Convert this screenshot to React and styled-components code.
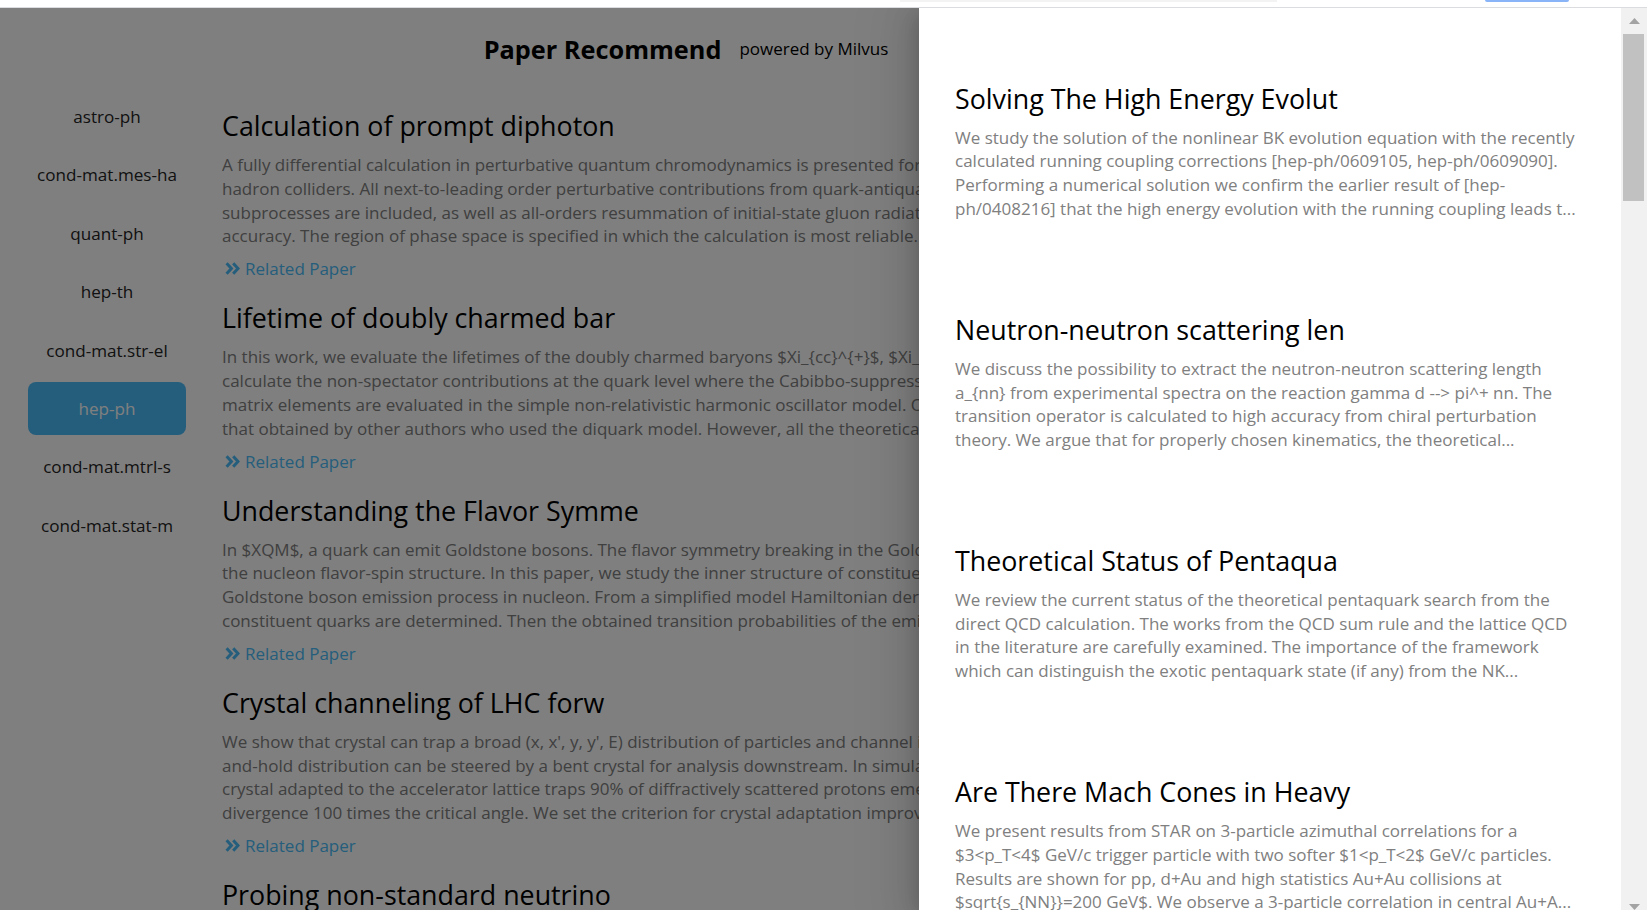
import React from 'react';
import styled, { createGlobalStyle } from 'styled-components';

const GlobalStyle = createGlobalStyle`
  html, body { margin: 0; padding: 0; height: 100%; overflow: hidden; background: #fff; }
  body { font-family: "Open Sans", "Noto Sans", sans-serif; }
  #root { height: 100%; }
  * { box-sizing: border-box; }
`;

const Shell = styled.div`
  display: flex;
  flex-direction: column;
  height: 100vh;
  overflow: hidden;
`;

const BrowserStrip = styled.div`
  flex: none;
  height: 8px;
  border-bottom: 1px solid #dadce0;
  background: #fff;
  display: flex;
  align-items: flex-start;
`;

const StripField = styled.div`
  margin-left: 900px;
  width: 377px;
  height: 2px;
  background: #f3f3f3;
`;

const StripPill = styled.div`
  margin-left: 208px;
  width: 84px;
  height: 2px;
  border-radius: 0 0 3px 3px;
  background: #8ab4f8;
`;

const Stage = styled.div`
  position: relative;
  flex: none;
  height: 902px;
  overflow: hidden;
`;

const Page = styled.div`
  width: 1372px;
`;

const Header = styled.header`
  height: 81px;
  display: flex;
  align-items: center;
  justify-content: center;
  gap: 18px;
`;

const Brand = styled.h1`
  margin: 0;
  font-size: 25.3px;
  font-weight: 700;
  color: #000;
`;

const Powered = styled.span`
  font-size: 17px;
  color: #000;
`;

const Body = styled.div`
  display: flex;
  align-items: flex-start;
`;

const Nav = styled.nav`
  flex: none;
  width: 214px;
  padding: 1px 28px 0;
  display: flex;
  flex-direction: column;
  gap: 5.4px;
`;

const NavItem = styled.div`
  height: 53px;
  display: flex;
  align-items: center;
  justify-content: center;
  border-radius: 8px;
  font-size: 17.1px;
  white-space: nowrap;
  color: ${(p) => (p.$active ? '#fff' : '#242424')};
  background: ${(p) => (p.$active ? '#4abcf8' : 'transparent')};
`;

const Feed = styled.main`
  flex: 1;
  min-width: 0;
  padding: 17px 0 0 8px;
`;

const Article = styled.article`
  padding-bottom: 14.4px;
`;

const Title = styled.h2`
  margin: 0;
  width: fit-content;
  font-size: 26.8px;
  line-height: 40px;
  font-weight: 400;
  color: #000;
  white-space: pre;
`;

const Abstract = styled.p`
  margin: 7px 0 0;
  width: 697px;
  font-size: 17px;
  line-height: 23.8px;
  color: #808080;
  white-space: pre;
  overflow: hidden;
`;

const Related = styled.a`
  display: flex;
  width: fit-content;
  align-items: center;
  gap: 5px;
  margin: 5.7px 0 0 3px;
  height: 30px;
  font-size: 17px;
  color: #4abcf8;
  text-decoration: none;
`;

const Mask = styled.div`
  position: absolute;
  inset: 0;
  background: rgba(0, 0, 0, 0.5);
`;

const Drawer = styled.aside`
  position: absolute;
  top: 0;
  right: 0;
  bottom: -10px;
  width: 728px;
  background: #fff;
  display: flex;
  box-shadow: -6px 0 16px -8px rgba(0, 0, 0, 0.16), -9px 0 28px 0 rgba(0, 0, 0, 0.1),
    -12px 0 48px 16px rgba(0, 0, 0, 0.06);
`;

const DrawerBody = styled.div`
  flex: 1;
  overflow: hidden;
  padding: 70.7px 6px 0 36px;
`;

const Rec = styled.section`
  height: 231.1px;
`;

const RecAbstract = styled.p`
  margin: 7px 0 0;
  font-size: 17px;
  line-height: 23.8px;
  color: #808080;
  white-space: pre;
`;

const ScrollRail = styled.div`
  flex: none;
  width: 26px;
  background: #f1f1f1;
  display: flex;
  flex-direction: column;
`;

const ScrollArrow = styled.div`
  flex: none;
  height: 26px;
  display: flex;
  align-items: center;
  justify-content: center;
`;

const Track = styled.div`
  flex: 1;
`;

const Thumb = styled.div`
  height: 167px;
  margin: 0 3px 0 2px;
  background: #c1c1c1;
`;

const navItems = [
  'astro-ph',
  'cond-mat.mes-ha',
  'quant-ph',
  'hep-th',
  'cond-mat.str-el',
  'hep-ph',
  'cond-mat.mtrl-s',
  'cond-mat.stat-m',
];

const papers = [
  {
    title: 'Calculation of prompt diphoton',
    abstract:
      'A fully differential calculation in perturbative quantum chromodynamics is presented for\nhadron colliders. All next-to-leading order perturbative contributions from quark-antiquark,\nsubprocesses are included, as well as all-orders resummation of initial-state gluon radiation\naccuracy. The region of phase space is specified in which the calculation is most reliable.',
  },
  {
    title: 'Lifetime of doubly charmed bar',
    abstract:
      'In this work, we evaluate the lifetimes of the doubly charmed baryons $Xi_{cc}^{+}$, $Xi_{cc}\ncalculate the non-spectator contributions at the quark level where the Cabibbo-suppressed\nmatrix elements are evaluated in the simple non-relativistic harmonic oscillator model. Our\nthat obtained by other authors who used the diquark model. However, all the theoretical',
  },
  {
    title: 'Understanding the Flavor Symme',
    abstract:
      'In $XQM$, a quark can emit Goldstone bosons. The flavor symmetry breaking in the Goldstone\nthe nucleon flavor-spin structure. In this paper, we study the inner structure of constituent\nGoldstone boson emission process in nucleon. From a simplified model Hamiltonian derived\nconstituent quarks are determined. Then the obtained transition probabilities of the emission',
  },
  {
    title: 'Crystal channeling of LHC forw',
    abstract:
      "We show that crystal can trap a broad (x, x', y, y', E) distribution of particles and channel it\nand-hold distribution can be steered by a bent crystal for analysis downstream. In simulations\ncrystal adapted to the accelerator lattice traps 90% of diffractively scattered protons emerging\ndivergence 100 times the critical angle. We set the criterion for crystal adaptation improving",
  },
  {
    title: 'Probing non-standard neutrino ',
  },
];

const recommendations = [
  {
    title: 'Solving The High Energy Evolut',
    abstract:
      'We study the solution of the nonlinear BK evolution equation with the recently\ncalculated running coupling corrections [hep-ph/0609105, hep-ph/0609090].\nPerforming a numerical solution we confirm the earlier result of [hep-\nph/0408216] that the high energy evolution with the running coupling leads t...',
  },
  {
    title: 'Neutron-neutron scattering len',
    abstract:
      'We discuss the possibility to extract the neutron-neutron scattering length\na_{nn} from experimental spectra on the reaction gamma d --> pi^+ nn. The\ntransition operator is calculated to high accuracy from chiral perturbation\ntheory. We argue that for properly chosen kinematics, the theoretical...',
  },
  {
    title: 'Theoretical Status of Pentaqua',
    abstract:
      'We review the current status of the theoretical pentaquark search from the\ndirect QCD calculation. The works from the QCD sum rule and the lattice QCD\nin the literature are carefully examined. The importance of the framework\nwhich can distinguish the exotic pentaquark state (if any) from the NK...',
  },
  {
    title: 'Are There Mach Cones in Heavy ',
    abstract:
      'We present results from STAR on 3-particle azimuthal correlations for a\n$3<p_T<4$ GeV/c trigger particle with two softer $1<p_T<2$ GeV/c particles.\nResults are shown for pp, d+Au and high statistics Au+Au collisions at\n$sqrt{s_{NN}}=200 GeV$. We observe a 3-particle correlation in central Au+A...',
  },
];

const DoubleChevron = () => (
  <svg width="15" height="13" viewBox="0 0 15 13" aria-hidden="true">
    <path
      d="M1.6 1.2 L6.4 6.5 L1.6 11.8 M8.2 1.2 L13 6.5 L8.2 11.8"
      fill="none"
      stroke="currentColor"
      strokeWidth="3"
      strokeLinejoin="miter"
    />
  </svg>
);

const Arrow = ({ down }) => (
  <svg width="11" height="6" viewBox="0 0 11 6" aria-hidden="true">
    <path d={down ? 'M0 0 H11 L5.5 6 Z' : 'M0 6 H11 L5.5 0 Z'} fill="#a3a3a3" />
  </svg>
);

export default function App() {
  return (
    <>
      <GlobalStyle />
      <Shell>
        <BrowserStrip>
          <StripField />
          <StripPill />
        </BrowserStrip>
        <Stage>
          <Page>
            <Header>
              <Brand>Paper Recommend</Brand>
              <Powered>powered by Milvus</Powered>
            </Header>
            <Body>
              <Nav>
                {navItems.map((n) => (
                  <NavItem key={n} $active={n === 'hep-ph'}>
                    {n}
                  </NavItem>
                ))}
              </Nav>
              <Feed>
                {papers.map((p) => (
                  <Article key={p.title}>
                    <Title>{p.title}</Title>
                    {p.abstract && (
                      <>
                        <Abstract>{p.abstract}</Abstract>
                        <Related href="#">
                          <DoubleChevron />
                          Related Paper
                        </Related>
                      </>
                    )}
                  </Article>
                ))}
              </Feed>
            </Body>
          </Page>
          <Mask />
          <Drawer>
            <DrawerBody>
              {recommendations.map((r) => (
                <Rec key={r.title}>
                  <Title>{r.title}</Title>
                  <RecAbstract>{r.abstract}</RecAbstract>
                </Rec>
              ))}
            </DrawerBody>
            <ScrollRail>
              <ScrollArrow>
                <Arrow />
              </ScrollArrow>
              <Track>
                <Thumb />
              </Track>
              <ScrollArrow>
                <Arrow down />
              </ScrollArrow>
            </ScrollRail>
          </Drawer>
        </Stage>
      </Shell>
    </>
  );
}
